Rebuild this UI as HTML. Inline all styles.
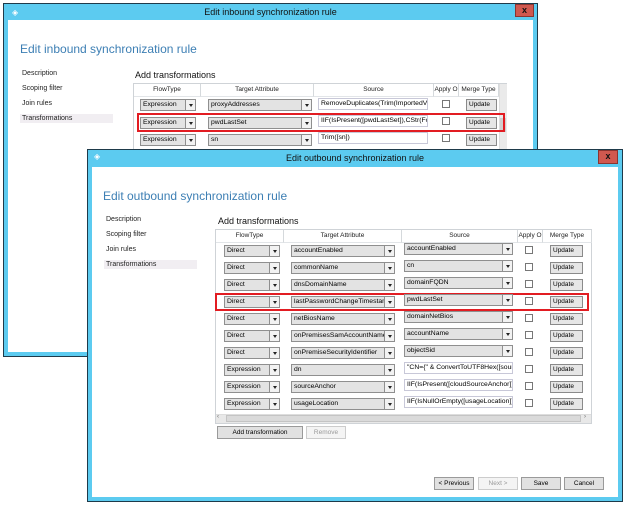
<!DOCTYPE html>
<html><head><meta charset="utf-8"><style>
*{box-sizing:border-box;margin:0;padding:0}
body{width:625px;height:506px;background:#fff;position:relative;overflow:hidden;font-family:"Liberation Sans",sans-serif;color:#000}
div,span{position:absolute}
.win{border:1px solid #1e3a4a;background:#5ccbf0}
.inner{background:#fff}
.title{font-size:9px;color:#111;text-align:center;line-height:16px}
.close{background:#d0584f;border:1px solid #8a3430;color:#111;font-size:9px;font-weight:bold;text-align:center;line-height:11px}
.h1{font-size:12px;color:#3d7fb4;white-space:nowrap}
.nav{font-size:7px;color:#222;white-space:nowrap}
.h2{font-size:9px;color:#111;white-space:nowrap}
.tbl{border:1px solid #cfd3d7;background:#fff}
.th{font-size:6.5px;color:#222;text-align:center;line-height:12px;border-right:1px solid #d5d9dc;border-bottom:1px solid #e2e5e8;top:0;height:13px;overflow:hidden;white-space:nowrap}
.cb{height:12px;background:#e3e3e3;border:1px solid #8f8f8f;font-size:6.8px;line-height:10px;padding-left:2px;white-space:nowrap;overflow:hidden}
.cb .ar{right:0;top:0;width:10px;height:10px;border-left:1px solid #8f8f8f;background:#f2f2f2}
.cb .ar:after{content:"";position:absolute;left:3px;top:4px;border-left:2px solid transparent;border-right:2px solid transparent;border-top:3px solid #222}
.tx{height:12px;background:#fff;border:1px solid #c8c8d8;font-size:6.8px;line-height:10px;padding-left:2px;white-space:nowrap;overflow:hidden}
.ck{width:8px;height:8px;border:1px solid #777;background:#fff}
.up{height:12px;width:33px;background:#e6e6e6;border:1px solid #8a8a8a;font-size:6.5px;line-height:10px;padding-left:2px}
.btn{height:13px;background:#e1e1e1;border:1px solid #9a9a9a;font-size:6.5px;line-height:11px;text-align:center}
.red{border:2px solid #e21c22}
</style></head><body>

<!-- BACK WINDOW -->
<div class="win" style="left:3px;top:3px;width:535px;height:354px">
  <div class="title" style="left:0;top:0;width:533px">Edit inbound synchronization rule</div>
  <div style="left:8px;top:4px;color:#fff;font-size:8px">◈</div>
  <div class="close" style="left:511px;top:0;width:19px;height:13px">x</div>
  <div class="inner" style="left:4px;top:16px;width:525px;height:332px"></div>
</div>
<div class="h1" style="left:20px;top:42px">Edit inbound synchronization rule</div>
<div class="nav" style="left:22px;top:70px">Description</div>
<div class="nav" style="left:22px;top:85px">Scoping filter</div>
<div class="nav" style="left:22px;top:100px">Join rules</div>
<div style="left:20px;top:114px;width:93px;height:9px;background:#f1eef2"></div>
<div class="nav" style="left:22px;top:115px">Transformations</div>
<div class="h2" style="left:135px;top:70px">Add transformations</div>
<div class="tbl" style="left:133px;top:83px;width:374px;height:70px">
  <div class="th" style="left:0;width:67px">FlowType</div>
  <div class="th" style="left:67px;width:113px">Target Attribute</div>
  <div class="th" style="left:180px;width:120px">Source</div>
  <div class="th" style="left:300px;width:25px">Apply O</div>
  <div class="th" style="left:325px;width:40px">Merge Type</div>
  <div style="left:365px;top:0;width:8px;height:70px;background:#eaeaea;border-left:1px solid #ddd"></div>
  <div style="left:366px;top:34px;width:6px;height:14px;background:#cfcfcf"></div>
</div>
<div class="cb" style="left:140px;top:99px;width:56px">Expression<span class="ar"></span></div>
<div class="cb" style="left:208px;top:99px;width:104px">proxyAddresses<span class="ar"></span></div>
<div class="tx" style="left:318px;top:98px;width:110px">RemoveDuplicates(Trim(ImportedV</div>
<div class="ck" style="left:442px;top:100px"></div><div class="up" style="left:466px;top:99px;width:31px">Update</div>
<div class="cb" style="left:140px;top:117px;width:56px">Expression<span class="ar"></span></div>
<div class="cb" style="left:208px;top:117px;width:104px">pwdLastSet<span class="ar"></span></div>
<div class="tx" style="left:318px;top:115px;width:110px">IIF(IsPresent([pwdLastSet]),CStr(For</div>
<div class="ck" style="left:442px;top:117px"></div><div class="up" style="left:466px;top:117px;width:31px">Update</div>
<div class="cb" style="left:140px;top:134px;width:56px">Expression<span class="ar"></span></div>
<div class="cb" style="left:208px;top:134px;width:104px">sn<span class="ar"></span></div>
<div class="tx" style="left:318px;top:132px;width:110px">Trim([sn])</div>
<div class="ck" style="left:442px;top:134px"></div><div class="up" style="left:466px;top:134px;width:31px">Update</div>
<div class="red" style="left:137px;top:113px;width:368px;height:19px"></div>

<!-- FRONT WINDOW -->
<div class="win" style="left:87px;top:149px;width:536px;height:353px">
  <div class="title" style="left:0;top:0;width:534px">Edit outbound synchronization rule</div>
  <div style="left:6px;top:2px;color:#fff;font-size:8px">◈</div>
  <div class="close" style="left:510px;top:0;width:20px;height:14px">x</div>
  <div class="inner" style="left:4px;top:17px;width:526px;height:330px"></div>
</div>
<div class="h1" style="left:103px;top:189px">Edit outbound synchronization rule</div>
<div class="nav" style="left:106px;top:216px">Description</div>
<div class="nav" style="left:106px;top:231px">Scoping filter</div>
<div class="nav" style="left:106px;top:246px">Join rules</div>
<div style="left:104px;top:260px;width:93px;height:9px;background:#f1eef2"></div>
<div class="nav" style="left:106px;top:261px">Transformations</div>
<div class="h2" style="left:218px;top:216px">Add transformations</div>
<div class="tbl" style="left:215px;top:229px;width:377px;height:195px">
  <div class="th" style="left:0;width:68px">FlowType</div>
  <div class="th" style="left:68px;width:118px">Target Attribute</div>
  <div class="th" style="left:186px;width:116px">Source</div>
  <div class="th" style="left:302px;width:25px">Apply O</div>
  <div class="th" style="left:327px;width:49px">Merge Type</div>
  <div style="left:0;top:184px;width:375px;height:9px;background:#e8e8e8;border-top:1px solid #ddd"></div>
  <div style="left:10px;top:185px;width:355px;height:7px;background:#dadada;border:1px solid #c4c4c4"></div>
  <div style="left:1px;top:184px;font-size:6px;color:#666">‹</div>
  <div style="left:368px;top:184px;font-size:6px;color:#666">›</div>
</div>

<div class="red" style="left:215px;top:293px;width:374px;height:18px"></div>

<div class="btn" style="left:217px;top:426px;width:86px">Add transformation</div>
<div class="btn" style="left:306px;top:426px;width:40px;background:#f4f4f4;border-color:#ccc;color:#999">Remove</div>
<div class="btn" style="left:434px;top:477px;width:40px">&lt; Previous</div>
<div class="btn" style="left:478px;top:477px;width:40px;background:#f4f4f4;border-color:#ccc;color:#999">Next &gt;</div>
<div class="btn" style="left:521px;top:477px;width:40px">Save</div>
<div class="btn" style="left:564px;top:477px;width:40px">Cancel</div>

<div class="cb" style="left:224px;top:245px;width:56px">Direct<span class="ar"></span></div><div class="cb" style="left:291px;top:245px;width:104px">accountEnabled<span class="ar"></span></div><div class="cb" style="left:404px;top:243px;width:109px">accountEnabled<span class="ar"></span></div><div class="ck" style="left:525px;top:246px"></div><div class="up" style="left:550px;top:245px">Update</div>
<div class="cb" style="left:224px;top:262px;width:56px">Direct<span class="ar"></span></div><div class="cb" style="left:291px;top:262px;width:104px">commonName<span class="ar"></span></div><div class="cb" style="left:404px;top:260px;width:109px">cn<span class="ar"></span></div><div class="ck" style="left:525px;top:263px"></div><div class="up" style="left:550px;top:262px">Update</div>
<div class="cb" style="left:224px;top:279px;width:56px">Direct<span class="ar"></span></div><div class="cb" style="left:291px;top:279px;width:104px">dnsDomainName<span class="ar"></span></div><div class="cb" style="left:404px;top:277px;width:109px">domainFQDN<span class="ar"></span></div><div class="ck" style="left:525px;top:280px"></div><div class="up" style="left:550px;top:279px">Update</div>
<div class="cb" style="left:224px;top:296px;width:56px">Direct<span class="ar"></span></div><div class="cb" style="left:291px;top:296px;width:104px">lastPasswordChangeTimestamp<span class="ar"></span></div><div class="cb" style="left:404px;top:294px;width:109px">pwdLastSet<span class="ar"></span></div><div class="ck" style="left:525px;top:297px"></div><div class="up" style="left:550px;top:296px">Update</div>
<div class="cb" style="left:224px;top:313px;width:56px">Direct<span class="ar"></span></div><div class="cb" style="left:291px;top:313px;width:104px">netBiosName<span class="ar"></span></div><div class="cb" style="left:404px;top:311px;width:109px">domainNetBios<span class="ar"></span></div><div class="ck" style="left:525px;top:314px"></div><div class="up" style="left:550px;top:313px">Update</div>
<div class="cb" style="left:224px;top:330px;width:56px">Direct<span class="ar"></span></div><div class="cb" style="left:291px;top:330px;width:104px">onPremisesSamAccountName<span class="ar"></span></div><div class="cb" style="left:404px;top:328px;width:109px">accountName<span class="ar"></span></div><div class="ck" style="left:525px;top:331px"></div><div class="up" style="left:550px;top:330px">Update</div>
<div class="cb" style="left:224px;top:347px;width:56px">Direct<span class="ar"></span></div><div class="cb" style="left:291px;top:347px;width:104px">onPremiseSecurityIdentifier<span class="ar"></span></div><div class="cb" style="left:404px;top:345px;width:109px">objectSid<span class="ar"></span></div><div class="ck" style="left:525px;top:348px"></div><div class="up" style="left:550px;top:347px">Update</div>
<div class="cb" style="left:224px;top:364px;width:56px">Expression<span class="ar"></span></div><div class="cb" style="left:291px;top:364px;width:104px">dn<span class="ar"></span></div><div class="tx" style="left:404px;top:362px;width:109px">"CN={" &amp; ConvertToUTF8Hex([sour</div><div class="ck" style="left:525px;top:365px"></div><div class="up" style="left:550px;top:364px">Update</div>
<div class="cb" style="left:224px;top:381px;width:56px">Expression<span class="ar"></span></div><div class="cb" style="left:291px;top:381px;width:104px">sourceAnchor<span class="ar"></span></div><div class="tx" style="left:404px;top:379px;width:109px">IIF(IsPresent([cloudSourceAnchor]),</div><div class="ck" style="left:525px;top:382px"></div><div class="up" style="left:550px;top:381px">Update</div>
<div class="cb" style="left:224px;top:398px;width:56px">Expression<span class="ar"></span></div><div class="cb" style="left:291px;top:398px;width:104px">usageLocation<span class="ar"></span></div><div class="tx" style="left:404px;top:396px;width:109px">IIF(IsNullOrEmpty([usageLocation]),</div><div class="ck" style="left:525px;top:399px"></div><div class="up" style="left:550px;top:398px">Update</div>
</body></html>
